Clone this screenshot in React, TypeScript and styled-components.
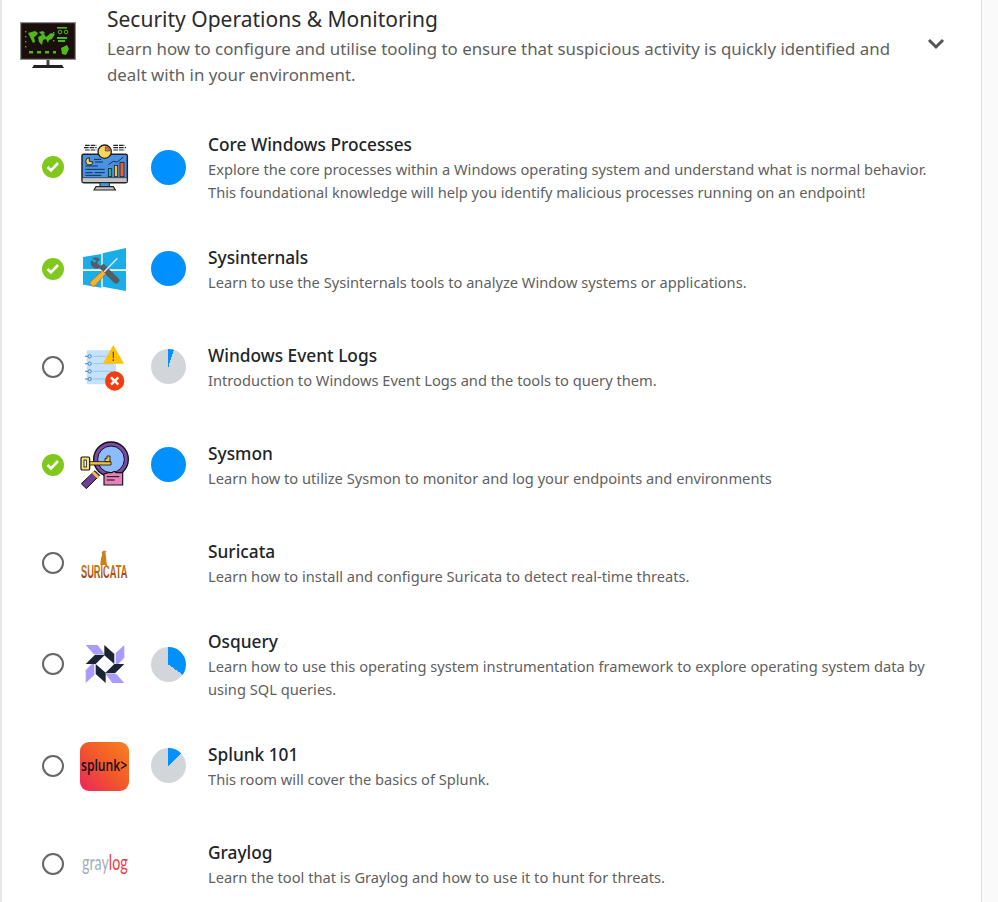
import React from 'react'
import styled, { createGlobalStyle } from 'styled-components'

const GlobalStyle = createGlobalStyle`
    html, body {
        margin: 0;
        height: 100%;
        overflow: hidden;
        background: #fafafa;
        font-family: 'Noto Sans', 'Open Sans', sans-serif;
    }
`

const MonitorIcon = () => (
    <svg width="56" height="46" viewBox="0 0 56 46">
        <rect x="0" y="0" width="56" height="38" fill="#8f8f8f" />
        <rect x="1.2" y="1.2" width="53.6" height="35.6" fill="#1b0f0c" />
        <g fill="#4fb81f">
            <path d="M8 11l7-2 3 2-2 3-2 1 1 5-2 1-3-6zM19 10l4-1 2 2-3 2zM18 15l6-3 2 3 5-4 4 1-3 5-3 1-1 3-2-4-3 1-1 5-3-3z" />
            <rect x="37" y="5" width="10" height="1.6" />
            <rect x="37" y="15" width="10" height="2" />
            <rect x="38" y="18" width="7" height="2" />
            <path d="M41 26l6-3 2 4-3 6-4-1z" />
            <rect x="9" y="29" width="4" height="2.500" />
            <rect x="17" y="29" width="4" height="2.500" />
            <rect x="25" y="29" width="4" height="2.500" />
            <rect x="33" y="29" width="3" height="2.500" />
            <rect x="5" y="9" width="1.400" height="1.400" />
            <rect x="5" y="14" width="1.400" height="1.400" />
            <rect x="5" y="19" width="1.400" height="1.400" />
            <rect x="5" y="24" width="1.400" height="1.400" />
            <rect x="33" y="10" width="1.400" height="1.400" />
            <rect x="33" y="18" width="1.400" height="1.400" />
        </g>
        <g fill="none" stroke="#4fb81f">
            <circle cx="40" cy="10" r="1.800" />
            <circle cx="46" cy="10" r="1.800" />
        </g>
        <rect x="26.500" y="38" width="3" height="5" fill="#444" />
        <path d="M12 46l2-3h28l2 3z" fill="#222" />
    </svg>
)

// the row icons below are traced at 3x, so the viewBox is 150 for a 50px cell
const DashboardIcon = () => (
    <svg width="50" height="50" viewBox="0 0 150 150">
        <g stroke="#222" strokeWidth="3.500" strokeDasharray="14 3">
            <path d="M15 10h35M12 17h38M15 24h35M100 10h35M100 17h38M100 24h35" />
        </g>
        <rect x="6" y="37" width="136" height="85" rx="5" fill="#4a92e6" stroke="#222" strokeWidth="4.500" />
        <rect x="8" y="107" width="132" height="13" fill="#c4c4c4" />
        <path d="M6 107h136" stroke="#222" strokeWidth="2" />
        <circle cx="74" cy="29" r="20" fill="#f6d860" stroke="#222" strokeWidth="4" />
        <path d="M76 27V14a14 14 0 0 1 13 13z" fill="#ee6c45" stroke="#222" strokeWidth="1.500" />
        <path d="M28 47a11 11 0 1 0 11 13l-11-2z" fill="#f6d860" stroke="#222" strokeWidth="3" />
        <g stroke="#12304f" strokeWidth="3">
            <path d="M42 52h22M45 60h24M16 72h38M16 82h58M16 92h22M44 92h30M16 100h48" />
        </g>
        <path d="M85 68l15-10 12 2 18-15" fill="none" stroke="#12304f" strokeWidth="3" />
        <rect x="85" y="80" width="10" height="24" fill="#1fb5a8" stroke="#222" strokeWidth="2.500" />
        <rect x="103" y="70" width="10" height="34" fill="#f0c23e" stroke="#222" strokeWidth="2.500" />
        <rect x="120" y="61" width="12" height="43" fill="#ee5e36" stroke="#222" strokeWidth="2.500" />
        <rect x="60" y="122" width="28" height="12" fill="#4a92e6" stroke="#222" strokeWidth="3" />
        <path d="M42 144l6-10h52l6 10z" fill="#c4c4c4" stroke="#222" strokeWidth="3.500" />
    </svg>
)

const WindowsToolsIcon = () => (
    <svg width="50" height="50" viewBox="0 0 150 150">
        <g fill="#1aaee8">
            <path d="M9 39l55-9v46H9z" />
            <path d="M68 28l70-16v64H68z" />
            <path d="M9 81h55v50l-55-9z" />
            <path d="M68 81h70v60l-70-13z" />
        </g>
        <path d="M36 44a18 18 0 0 1 24 2l-9 10 9 10 11-7 44 44a9 9 0 0 1-13 13L58 72a18 18 0 0 1-24-24l10 8 6-6z" fill="#565b66" />
        <path d="M112 43L70 86" stroke="#e8e8e8" strokeWidth="4" />
        <path d="M68 80l9 9-30 34a8 8 0 0 1-14-11z" fill="#f7b32b" stroke="#b9651b" strokeWidth="2" />
    </svg>
)

const EventLogIcon = () => (
    <svg width="50" height="50" viewBox="0 0 150 150">
        <rect x="20" y="25" width="88" height="102" rx="2" fill="#c5e1fb" />
        <g stroke="#9dcdf7" strokeWidth="4">
            <path d="M40 43h60M40 65h60M40 88h60M40 111h60" />
        </g>
        <g stroke="#3f86c9" strokeWidth="3">
            <path d="M15 43h12M15 65h12M15 88h12M15 111h12" />
        </g>
        <g fill="#c5e1fb" stroke="#3f86c9" strokeWidth="3">
            <circle cx="29" cy="43" r="5" />
            <circle cx="29" cy="65" r="5" />
            <circle cx="29" cy="88" r="5" />
            <circle cx="29" cy="111" r="5" />
        </g>
        <path d="M100 9l32 56H68z" fill="#ffc107" />
        <path d="M98 29h4l-.5 20h-3zM98 52h4v5h-4z" fill="#444" />
        <circle cx="104" cy="117" r="29" fill="#f33c0f" />
        <path d="M93 106l22 22M115 106l-22 22" stroke="#fff" strokeWidth="7" />
    </svg>
)

const SysmonIcon = () => (
    <svg width="50" height="50" viewBox="0 0 150 150">
        <circle cx="93" cy="58" r="52" fill="#7b4aa8" stroke="#111" strokeWidth="4" />
        <circle cx="93" cy="58" r="40" fill="#8cbcfb" stroke="#111" strokeWidth="3" />
        <path d="M45 92l14 14-40 40-15-15z" fill="#6b3f96" stroke="#111" strokeWidth="3" />
        <path d="M38 96l18 18" stroke="#f0c23e" strokeWidth="8" />
        <rect x="3" y="51" width="26" height="39" rx="4" fill="#f8e27c" stroke="#111" strokeWidth="3.500" />
        <rect x="12" y="60" width="7" height="21" fill="#fff" stroke="#111" strokeWidth="2.500" />
        <path d="M29 65h64v10H29z" fill="#f0c23e" stroke="#111" strokeWidth="2.500" />
        <path d="M75 65V55h6v-7h9v17z" fill="#f0c23e" stroke="#111" strokeWidth="2.500" />
        <path d="M72 102l13-4 10 0 8-4 5 4h20v37H72z" fill="#e97fb9" stroke="#111" strokeWidth="3.500" />
        <path d="M80 110h38M80 120h24" stroke="#111" strokeWidth="3" />
    </svg>
)

const OsqueryIcon = () => (
    <svg width="40" height="40" viewBox="0 0 120 120">
        <g fill="#a99bff">
            <path d="M2 3h36l20 27H26z" />
            <path d="M118 3v38l-26 27V27z" />
            <path d="M2 117V79l26-27v41z" />
            <path d="M118 117H82L62 90h32z" />
        </g>
        <g fill="#1c2433">
            <path d="M58 3l30 27v30l-30-26z" />
            <path d="M2 60l28-28h30L32 60z" />
            <path d="M118 60L90 88H60l28-28z" />
            <path d="M62 117L32 90V60l30 26z" />
        </g>
    </svg>
)

const SuricataLogo = () => (
    <svg width="52" height="44" viewBox="-1 -5 52 44">
        <defs>
            <linearGradient id="suricata-fill" x1="0" y1="0" x2="0" y2="1">
                <stop offset="0" stopColor="#d98a1c" />
                <stop offset="1" stopColor="#86310a" />
            </linearGradient>
        </defs>
        <path d="M24 4l3 1.200-1.600 1 .6 4 1 8.800h-7l.8-6.500 1.200-4-.4-3z" fill="#c9801f" />
        <text transform="translate(0 33) scale(0.495 1)" fontFamily="Liberation Sans" fontSize="19.500" fontWeight="700" fill="url(#suricata-fill)">SURICATA</text>
    </svg>
)

const SplunkLogo = () => (
    <SplunkBox>
        <svg width="49" height="49" viewBox="0 0 49 49">
            <text transform="translate(1 29) scale(0.76 1)" fontFamily="Open Sans" fontSize="16" fontWeight="600" fill="#15101f">splunk&gt;</text>
        </svg>
    </SplunkBox>
)

const GraylogLogo = () => (
    <svg width="50" height="30" viewBox="0 0 50 30">
        <text transform="translate(2 21) scale(0.68 1)" fontFamily="Lato" fontSize="21" fill="#a3adbd">gray<tspan fill="#ee3a43">log</tspan></text>
    </svg>
)

const courses = [
    { title: 'Core Windows Processes', text: 'Explore the core processes within a Windows operating system and understand what is normal behavior.\nThis foundational knowledge will help you identify malicious processes running on an endpoint!', done: true, progress: 100, icon: <DashboardIcon /> },
    { title: 'Sysinternals', text: 'Learn to use the Sysinternals tools to analyze Window systems or applications.', done: true, progress: 100, icon: <WindowsToolsIcon /> },
    { title: 'Windows Event Logs', text: 'Introduction to Windows Event Logs and the tools to query them.', done: false, progress: 5, icon: <EventLogIcon /> },
    { title: 'Sysmon', text: 'Learn how to utilize Sysmon to monitor and log your endpoints and environments', done: true, progress: 100, icon: <SysmonIcon /> },
    { title: 'Suricata', text: 'Learn how to install and configure Suricata to detect real-time threats.', done: false, progress: 0, icon: <SuricataLogo /> },
    { title: 'Osquery', text: 'Learn how to use this operating system instrumentation framework to explore operating system data by\nusing SQL queries.', done: false, progress: 35, icon: <OsqueryIcon /> },
    { title: 'Splunk 101', text: 'This room will cover the basics of Splunk.', done: false, progress: 13, icon: <SplunkLogo /> },
    { title: 'Graylog', text: 'Learn the tool that is Graylog and how to use it to hunt for threats.', done: false, progress: 0, icon: <GraylogLogo /> },
]

const App = () => {
    return (
        <Panel>
            <GlobalStyle />
            <Header>
                <HeaderIcon><MonitorIcon /></HeaderIcon>
                <HeaderText>
                    <HeaderTitle>Security Operations &amp; Monitoring</HeaderTitle>
                    <HeaderDesc>Learn how to configure and utilise tooling to ensure that suspicious activity is quickly identified and dealt with in your environment.</HeaderDesc>
                </HeaderText>
                <Chevron width="18" height="12" viewBox="0 0 18 12">
                    <path d="M2 2l7 7 7-7" fill="none" stroke="#555" strokeWidth="3" />
                </Chevron>
            </Header>
            <List>
                {courses.map((c) => (
                    <Row key={c.title}>
                        {c.done ? (
                            <Check>
                                <svg width="14" height="12" viewBox="0 0 14 12">
                                    <path d="M1.500 6l3.500 3.500 7-7.500" fill="none" stroke="#fff" strokeWidth="2.600" />
                                </svg>
                            </Check>
                        ) : (
                            <Radio />
                        )}
                        <IconCell>{c.icon}</IconCell>
                        <PieCell>{c.progress > 0 && <Pie $value={c.progress} />}</PieCell>
                        <RowText>
                            <RowTitle>{c.title}</RowTitle>
                            <RowDesc>{c.text}</RowDesc>
                        </RowText>
                    </Row>
                ))}
            </List>
        </Panel>
    )
}

export default App

const Panel = styled.div`
    width: 982px;
    height: 902px;
    box-sizing: border-box;
    overflow: hidden;
    background: #fff;
    border-left: 2px solid #e8e8e8;
    border-right: 1px solid #e0e0e0;
`

const Header = styled.div`
    display: flex;
    align-items: flex-start;
    height: 114.5px;
    box-sizing: border-box;
    padding: 4px 36px 0 18px;
`

const HeaderIcon = styled.div`
    width: 56px;
    margin-top: 18px;
    margin-right: 31px;
    flex-shrink: 0;
`

const HeaderText = styled.div`
    width: 800px;
`

const HeaderTitle = styled.div`
    font-size: 21px;
    line-height: 30px;
    color: #2b2b2b;
`

const HeaderDesc = styled.div`
    margin-top: 2px;
    font-size: 16.85px;
    line-height: 26px;
    color: #5f5f5f;
`

const Chevron = styled.svg`
    margin-left: auto;
    margin-top: 34px;
`

const List = styled.div`
    display: flex;
    flex-direction: column;
`

const Row = styled.div`
    display: flex;
    align-items: center;
    min-height: 98px;
    box-sizing: border-box;
    padding: 16px 0 16px 40px;
`

const Check = styled.div`
    width: 22px;
    height: 22px;
    border-radius: 50%;
    background: #80c91c;
    display: flex;
    align-items: center;
    justify-content: center;
    flex-shrink: 0;
`

const Radio = styled.div`
    width: 22px;
    height: 22px;
    box-sizing: border-box;
    border: 2px solid #666;
    border-radius: 50%;
    flex-shrink: 0;
`

const IconCell = styled.div`
    width: 50px;
    height: 50px;
    margin-left: 16px;
    display: flex;
    align-items: center;
    justify-content: center;
    flex-shrink: 0;
`

const SplunkBox = styled.div`
    width: 49px;
    height: 49px;
    margin: 1px 1px 0 0;
    border-radius: 9px;
    background: linear-gradient(45deg, #ea2560 0%, #f2582a 50%, #f6821f 100%);
`

const PieCell = styled.div`
    width: 35px;
    height: 35px;
    margin-left: 21px;
    margin-right: 1px;
    flex-shrink: 0;
`

const Pie = styled.div<{ $value: number }>`
    width: 35px;
    height: 35px;
    border-radius: 50%;
    background: conic-gradient(#0090ff ${(p) => p.$value}%, #d2d6db 0);
`

const RowText = styled.div`
    margin-left: 21px;
    padding-top: 2px;
`

const RowTitle = styled.div`
    font-size: 17.3px;
    font-weight: 500;
    line-height: 24px;
    color: #212529;
`

const RowDesc = styled.div`
    margin-top: 1px;
    font-size: 14.67px;
    line-height: 23px;
    color: #5f5f5f;
    white-space: pre-line;
`
